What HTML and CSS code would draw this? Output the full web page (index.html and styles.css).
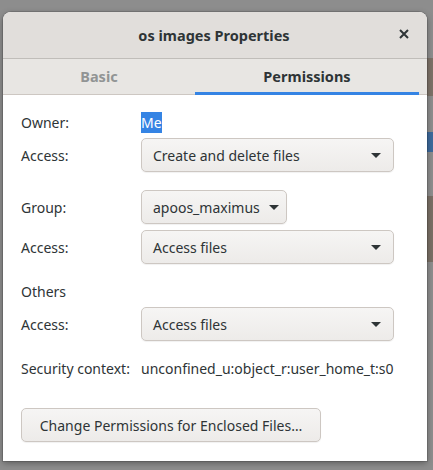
FILE: index.html
```html
<!DOCTYPE html>
<html>
<head>
<meta charset="utf-8">
<link rel="stylesheet" href="styles.css">
</head>
<body>
<div class="desk">
  <div class="dialog">
    <div class="header">
      <span class="title">os images Properties</span>
      <span class="close" aria-label="Close">
        <svg width="10" height="10" viewBox="0 0 10 10"><path d="M1 1L9 9M9 1L1 9" stroke="#2e3436" stroke-width="2" stroke-linecap="butt"/></svg>
      </span>
    </div>
    <div class="tabs">
      <div class="tab tab-basic">Basic</div>
      <div class="tab tab-perm active">Permissions</div>
      <div class="tab-pad"></div>
    </div>
    <div class="content">
      <div class="row r-owner">
        <span class="label">Owner:</span>
        <span class="value"><span class="sel">Me</span></span>
      </div>
      <div class="row r-tight">
        <span class="label">Access:</span>
        <div class="combo wide"><span>Create and delete files</span><i class="arrow"></i></div>
      </div>
      <div class="row r-gap">
        <span class="label">Group:</span>
        <div class="combo small"><span>apoos_maximus</span><i class="arrow"></i></div>
      </div>
      <div class="row r-tight">
        <span class="label">Access:</span>
        <div class="combo wide"><span>Access files</span><i class="arrow"></i></div>
      </div>
      <div class="row r-gap r-text">
        <span class="label">Others</span>
      </div>
      <div class="row r-tight">
        <span class="label">Access:</span>
        <div class="combo wide"><span>Access files</span><i class="arrow"></i></div>
      </div>
      <div class="row r-gap r-text">
        <span class="label">Security context:</span>
        <span class="value">unconfined_u:object_r:user_home_t:s0</span>
      </div>
      <div class="btn-row">
        <button class="btn">Change Permissions for Enclosed Files…</button>
      </div>
    </div>
  </div>
</div>
</body>
</html>
```
FILE: styles.css
```css
html, body {
  margin: 0;
  padding: 0;
}
body {
  width: 433px;
  height: 470px;
  overflow: hidden;
  background: #8d8d8d;
  font-family: "Noto Sans", "DejaVu Sans", sans-serif;
  font-size: 14px;
  color: #2e3436;
}
.desk {
  width: 433px;
  height: 470px;
  padding: 12px 0 0 3px;
  box-sizing: border-box;
  background:
    linear-gradient(#8d8d8d 0, #8d8d8d 58px, #7d7268 58px, #7d7268 96px, #8d8d8d 96px, #8d8d8d 132px, #3d6a9c 132px, #3d6a9c 152px, #8d8d8d 152px, #8d8d8d 196px, #7a7066 196px, #7a7066 262px, #8d8d8d 262px) 427px 0 / 6px 100% no-repeat,
    #8d8d8d;
}
.dialog {
  width: 424px;
  height: 449px;
  background: #ffffff;
  border-radius: 8px 8px 0 0;
  box-shadow: 0 2px 6px rgba(0,0,0,0.35), 0 0 0 1px rgba(0,0,0,0.12);
  display: flex;
  flex-direction: column;
  overflow: hidden;
}
.header {
  height: 46px;
  flex: none;
  background: #e1dedb;
  border-bottom: 1px solid #c0bdb9;
  display: flex;
  align-items: center;
  justify-content: center;
  position: relative;
}
.title {
  font-weight: bold;
  font-size: 14.5px;
  margin-left: -2px;
}
.close {
  position: absolute;
  right: 18px;
  top: 17px;
  width: 10px;
  height: 10px;
  display: flex;
}
.tabs {
  height: 36px;
  flex: none;
  background: #e8e6e3;
  border-bottom: 1px solid #cdc7c2;
  display: flex;
  box-sizing: border-box;
}
.tab {
  display: flex;
  align-items: center;
  justify-content: center;
  font-weight: bold;
  font-size: 14.5px;
  color: #919494;
  box-sizing: border-box;
  padding-bottom: 2px;
}
.tab-basic { width: 192px; }
.tab-perm { width: 224px; }
.tab-pad { flex: 1; }
.tab.active {
  color: #2e3436;
  border-bottom: 3px solid #3584e4;
  padding-bottom: 0;
  margin-bottom: -1px;
}
.content {
  flex: 1;
  padding: 18px 0 0 18px;
  display: flex;
  flex-direction: column;
}
.row {
  display: flex;
  align-items: center;
}
.r-owner { height: 19px; }
.r-text { height: 19px; }
.r-tight { margin-top: 6px; }
.r-gap { margin-top: 18px; }
.label {
  width: 120px;
  flex: none;
}
.sel {
  background: #3584e4;
  color: #ffffff;
  padding: 1px 0;
}
.combo {
  height: 34px;
  box-sizing: border-box;
  border: 1px solid #cdc7c2;
  border-radius: 5px;
  background: linear-gradient(#f6f5f4, #edebe9);
  box-shadow: 0 1px 1px rgba(0,0,0,0.06);
  display: flex;
  align-items: center;
  padding: 0 12px 0 11px;
}
.combo span { flex: 1; }
.combo.wide { width: 253px; }
.combo.small { width: 146px; padding-right: 8px; }
.combo.small span { flex: none; margin-right: 9px; }
.arrow {
  width: 0;
  height: 0;
  border-left: 5px solid transparent;
  border-right: 5px solid transparent;
  border-top: 5px solid #2e3436;
}
.btn-row {
  margin-top: 30px;
  display: flex;
}
.btn {
  height: 34px;
  width: 300px;
  box-sizing: border-box;
  border: 1px solid #cdc7c2;
  border-radius: 5px;
  background: linear-gradient(#f6f5f4, #edebe9);
  box-shadow: 0 1px 1px rgba(0,0,0,0.06);
  font-family: inherit;
  font-size: 14px;
  color: #2e3436;
  padding: 0;
}
```
